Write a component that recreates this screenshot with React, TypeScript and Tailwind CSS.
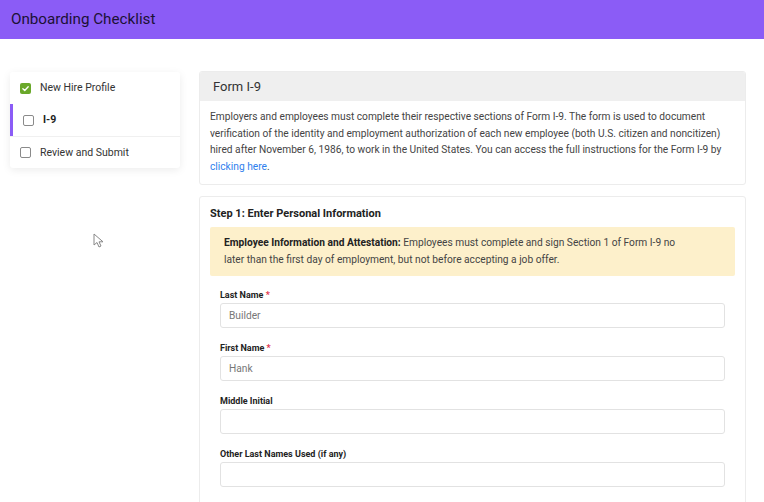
import React from "react";

function Check({ checked }: { checked?: boolean }) {
  if (checked) {
    return (
      <span className="flex h-[11px] w-[11px] items-center justify-center rounded-[2px] bg-[#6aa82a]">
        <svg viewBox="0 0 12 12" className="h-[9px] w-[9px]">
          <path d="M2.5 6.2 L5 8.6 L9.6 3.6" fill="none" stroke="#fff" strokeWidth="1.8" strokeLinecap="round" strokeLinejoin="round" />
        </svg>
      </span>
    );
  }
  return <span className="block h-[11px] w-[11px] rounded-[2px] border border-[#8a8a8a] bg-white" />;
}

function Field({ label, required, value }: { label: string; required?: boolean; value?: string }) {
  return (
    <div className="flex flex-col">
      <div className="h-[14px] text-[9px] font-bold leading-[14px] text-[#222]">
        {label}
        {required && <span className="text-[#e0314b]"> *</span>}
      </div>
      <div className="mt-[1px] flex h-[25px] items-center rounded-[3px] border border-[#e2e2e2] bg-white px-[8px] text-[10.2px] text-[#777]">
        {value}
      </div>
    </div>
  );
}

export default function App() {
  return (
    <div className="relative h-[502px] w-[764px] overflow-hidden bg-white font-['Roboto',sans-serif]">
      <div className="flex h-[39px] items-center bg-[#8b5cf6] pl-[11px] text-[15.2px] text-[#1c1135]">
        Onboarding Checklist
      </div>
      <div className="flex gap-[19px] pl-[10px] pr-[18px] pt-[32px]">
        <div className="w-[170px] shrink-0 pt-[1px]">
          <div className="rounded-[3px] bg-white shadow-[0_2px_8px_rgba(0,0,0,0.08)]">
            <div className="flex h-[32px] items-center gap-[9px] pl-[10px] text-[10.5px] text-[#333]">
              <Check checked />
              New Hire Profile
            </div>
            <div className="flex h-[32px] items-center gap-[9px] border-l-[3px] border-[#8b5cf6] pl-[10px] text-[10.5px] font-bold text-[#222]">
              <Check />
              I-9
            </div>
            <div className="flex h-[32px] items-center gap-[9px] border-t border-[#f0f0f0] pl-[10px] text-[10.5px] text-[#333]">
              <Check />
              Review and Submit
            </div>
          </div>
        </div>
        <div className="flex w-[547px] flex-col gap-[11px]">
          <div className="overflow-hidden rounded-[3px] border border-[#ececec] bg-white">
            <div className="flex h-[29px] items-center bg-[#efefef] pl-[13px] text-[13px] text-[#333]">Form I-9</div>
            <div className="px-[10px] pb-[9px] pt-[8px] text-[10.2px] leading-[16.5px] text-[#444]">
              Employers and employees must complete their respective sections of Form I-9. The form is used to document verification of the identity and employment authorization of each new employee (both U.S. citizen and noncitizen) hired after November 6, 1986, to work in the United States. You can access the full instructions for the Form I-9 by{" "}
              <span className="text-[#2f80ed]">clicking here</span>.
            </div>
          </div>
          <div className="h-[320px] rounded-[3px] border border-[#ececec] bg-white px-[10px] pt-[10px]">
            <div className="text-[11px] font-bold leading-[14px] text-[#222]">Step 1: Enter Personal Information</div>
            <div className="mt-[6px] rounded-[2px] bg-[#fdf0cb] py-[8px] pl-[14px] pr-[58px] text-[10.2px] leading-[16.5px] text-[#444]">
              <span className="font-bold text-[#222]">Employee Information and Attestation:</span> Employees must complete and sign Section 1 of Form I-9 no later than the first day of employment, but not before accepting a job offer.
            </div>
            <div className="mt-[12px] flex flex-col gap-[13px] px-[10px]">
              <Field label="Last Name" required value="Builder" />
              <Field label="First Name" required value="Hank" />
              <Field label="Middle Initial" />
              <Field label="Other Last Names Used (if any)" />
            </div>
          </div>
        </div>
      </div>
      <svg className="absolute left-[93px] top-[233px]" width="12" height="16" viewBox="0 0 12 16">
        <path d="M1 1 L1 12 L4 9.5 L6 14 L8 13 L6 8.8 L10 8.8 Z" fill="#fff" stroke="#888" strokeWidth="1" strokeLinejoin="round" />
      </svg>
    </div>
  );
}
